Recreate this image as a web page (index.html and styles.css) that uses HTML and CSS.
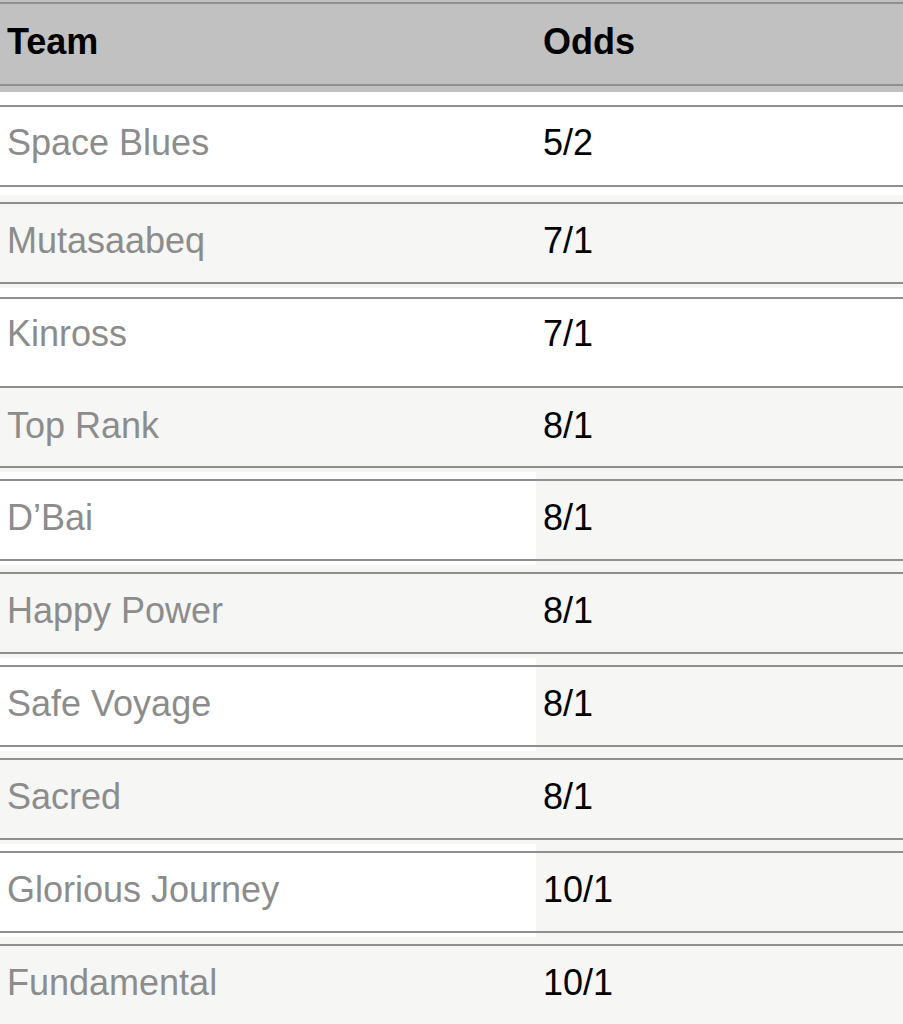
FILE: index.html
```html
<!DOCTYPE html>
<html lang="en">
<head>
<meta charset="utf-8">
<title>Odds</title>
<link rel="stylesheet" href="styles.css">
</head>
<body>
<div class="odds-table">
  <div class="head">
    <div class="head-cell"><span class="head-inner">Team</span></div>
    <div class="head-cell"><span class="head-inner">Odds</span></div>
  </div>

  <div class="row row--first">
    <div class="cell cell--white"><div class="inner team">Space Blues</div></div>
    <div class="cell cell--white"><div class="inner odds">5/2</div></div>
  </div>
  <div class="row">
    <div class="cell cell--grey"><div class="inner team">Mutasaabeq</div></div>
    <div class="cell cell--grey"><div class="inner odds">7/1</div></div>
  </div>
  <div class="row row--tall">
    <div class="cell cell--white"><div class="inner team">Kinross</div></div>
    <div class="cell cell--white"><div class="inner odds">7/1</div></div>
  </div>
  <div class="row row--joined">
    <div class="cell cell--grey"><div class="inner team">Top Rank</div></div>
    <div class="cell cell--grey"><div class="inner odds">8/1</div></div>
  </div>
  <div class="row">
    <div class="cell cell--white"><div class="inner team">D’Bai</div></div>
    <div class="cell cell--grey"><div class="inner odds">8/1</div></div>
  </div>
  <div class="row">
    <div class="cell cell--grey"><div class="inner team">Happy Power</div></div>
    <div class="cell cell--grey"><div class="inner odds">8/1</div></div>
  </div>
  <div class="row">
    <div class="cell cell--white"><div class="inner team">Safe Voyage</div></div>
    <div class="cell cell--grey"><div class="inner odds">8/1</div></div>
  </div>
  <div class="row">
    <div class="cell cell--grey"><div class="inner team">Sacred</div></div>
    <div class="cell cell--grey"><div class="inner odds">8/1</div></div>
  </div>
  <div class="row">
    <div class="cell cell--white"><div class="inner team">Glorious Journey</div></div>
    <div class="cell cell--grey"><div class="inner odds">10/1</div></div>
  </div>
  <div class="row">
    <div class="cell cell--grey"><div class="inner team">Fundamental</div></div>
    <div class="cell cell--grey"><div class="inner odds">10/1</div></div>
  </div>
</div>
</body>
</html>
```

FILE: styles.css
```css
html, body {
  margin: 0;
  padding: 0;
  background: #f6f6f4;
}

body {
  font-family: "Liberation Sans", Arial, Helvetica, sans-serif;
  font-size: 36px;
  line-height: 41px;
}

.odds-table {
  display: flex;
  flex-direction: column;
  width: 903px;
}

.head,
.row {
  display: grid;
  grid-template-columns: 536px 1fr;
}

.head-cell {
  background: #c0c1c0;
  padding: 2px 0 6px;
}

.head-inner {
  display: block;
  box-sizing: border-box;
  height: 84px;
  border-top: 2px solid #8f908f;
  border-bottom: 2px solid #8f908f;
  padding: 17px 0 0 7px;
  font-weight: bold;
  color: #000;
}

.cell {
  padding: 7px 0 4px;
}

.cell--white { background: #ffffff; }
.cell--grey  { background: #f6f6f4; }

.inner {
  box-sizing: border-box;
  height: 82px;
  border-top: 2px solid #8f8f8f;
  border-bottom: 2px solid #8f8f8f;
  padding: 16px 0 0 7px;
  white-space: nowrap;
}

.team { color: #8c8c8c; }
.odds { color: #000; }

.row--first .cell {
  padding-top: 13px;
  padding-bottom: 8px;
}
.row--first .inner {
  padding-top: 15px;
}

.row--tall .cell {
  padding-top: 9px;
  padding-bottom: 0;
}
.row--tall .inner {
  height: 91px;
  padding-top: 14px;
}

.row--joined .cell {
  padding-top: 0;
}
.row--joined .inner {
  border-top: 0;
  height: 80px;
  padding-top: 17px;
}
```
